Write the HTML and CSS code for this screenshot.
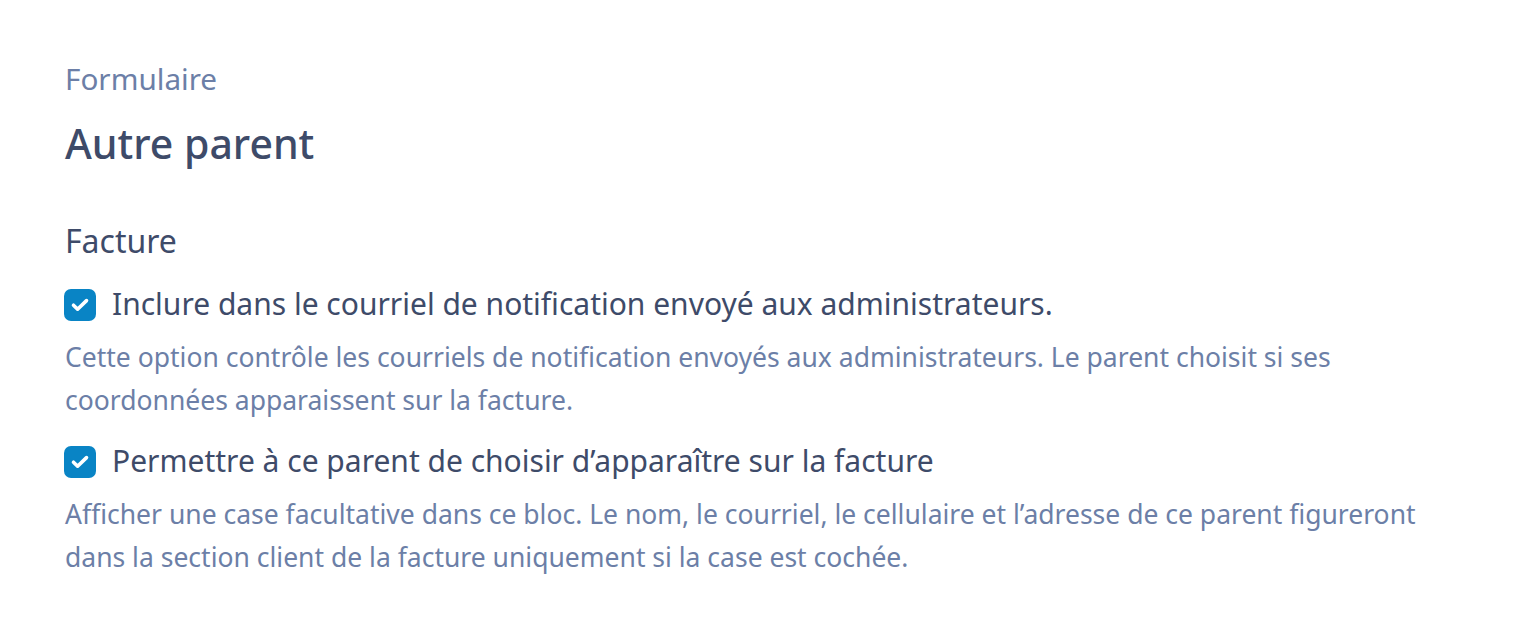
FILE: index.html
```html
<!DOCTYPE html>
<html lang="fr">
<head>
    <meta charset="UTF-8">
    <meta name="viewport" content="width=device-width, initial-scale=1.0">
    <title>Autre parent</title>
    <link rel="stylesheet" href="styles.css">
</head>
<body>
<div class="page">
    <div class="crumb">Formulaire</div>
    <h1 class="title">Autre parent</h1>

    <section class="block">
        <h2 class="block_title">Facture</h2>

        <div class="option">
            <label class="option_row">
                <span class="check">
                    <svg viewBox="0 0 32 32" width="32" height="32">
                        <path d="M9.5 16.2 L13.6 20.2 L22.5 11.6" />
                    </svg>
                </span>
                <span class="option_label">Inclure dans le courriel de notification envoyé aux administrateurs.</span>
            </label>
            <p class="option_help">Cette option contrôle les courriels de notification envoyés aux administrateurs. Le parent choisit si ses coordonnées apparaissent sur la facture.</p>
        </div>

        <div class="option">
            <label class="option_row">
                <span class="check">
                    <svg viewBox="0 0 32 32" width="32" height="32">
                        <path d="M9.5 16.2 L13.6 20.2 L22.5 11.6" />
                    </svg>
                </span>
                <span class="option_label">Permettre à ce parent de choisir d’apparaître sur la facture</span>
            </label>
            <p class="option_help">Afficher une case facultative dans ce bloc. Le nom, le courriel, le cellulaire et l’adresse de ce parent figureront dans la section client de la facture uniquement si la case est cochée.</p>
        </div>
    </section>
</div>
</body>
</html>
```
FILE: styles.css
```css
* {
    margin: 0;
    padding: 0;
    box-sizing: border-box;
}

body {
    background: #fff;
    font-family: "Noto Sans", "Open Sans", sans-serif;
    color: #3e4b69;
}

.page {
    width: 1462px;
    padding: 59px 0 40px 65px;
}

.crumb {
    font-size: 29.7px;
    line-height: 40px;
    color: #6c7fa7;
}

.title {
    margin-top: 18px;
    font-size: 41px;
    line-height: 52px;
    font-weight: 500;
    color: #3e4b69;
}

.block {
    margin-top: 50px;
}

.block_title {
    font-size: 32px;
    line-height: 44px;
    font-weight: 400;
    color: #3e4b69;
}

.option {
    margin-top: 19px;
}

.option + .option {
    margin-top: 17px;
}

.option_row {
    display: flex;
    align-items: flex-start;
    gap: 16px;
    cursor: pointer;
}

.check {
    flex: none;
    width: 32px;
    height: 32px;
    margin: 7px 0 0 -1px;
    border-radius: 7px;
    background: #0984c5;
    display: flex;
}

.check path {
    fill: none;
    stroke: #fff;
    stroke-width: 3.6;
    stroke-linecap: round;
    stroke-linejoin: round;
}

.option_label {
    font-size: 30px;
    line-height: 44px;
    color: #3e4b69;
}

.option_help {
    margin-top: 10px;
    font-size: 26.5px;
    line-height: 43px;
    color: #6c7fa7;
}
```
